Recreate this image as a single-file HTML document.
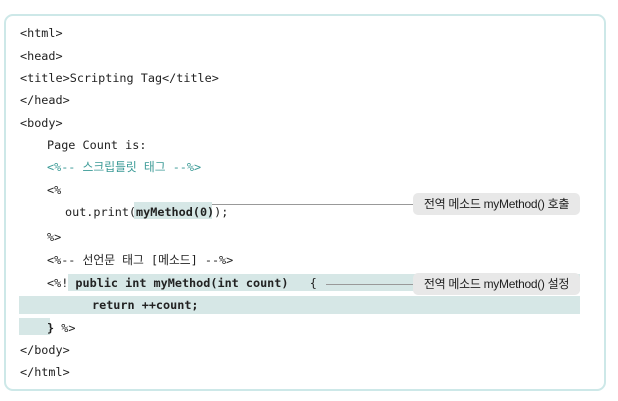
<!DOCTYPE html>
<html><head><meta charset="utf-8"><style>
body{margin:0;width:618px;height:401px;background:#fff;position:relative;font-family:"DejaVu Sans Mono","Noto Sans CJK KR",monospace;font-size:11.8px;color:#222;overflow:hidden}
.box{position:absolute;left:4px;top:14px;width:602px;height:377px;border:2px solid #cde8e8;border-radius:9px;box-sizing:border-box}
.l{position:absolute;white-space:pre;line-height:16px}
.hl{position:absolute;background:#d6e7e6}
.tag{position:absolute;background:#e8e8e8;border-radius:5px;font-family:"Liberation Sans","Noto Sans CJK KR",sans-serif;font-size:12px;color:#222;line-height:22px;text-align:center;width:167px;left:413px;letter-spacing:-0.3px}
.ln{position:absolute;height:1px;background:#999}
.c{color:#3a9a96}
b{font-weight:bold}
</style></head><body>
<div class="box"></div>
<div class="hl" style="left:134px;top:202px;width:78px;height:17px"></div>
<div class="hl" style="left:68px;top:274px;width:512px;height:17px"></div>
<div class="hl" style="left:19px;top:296px;width:561px;height:18px"></div>
<div class="hl" style="left:19px;top:318px;width:31px;height:17px"></div>
<div class="ln" style="left:212px;top:204px;width:201px"></div>
<div class="ln" style="left:326px;top:284px;width:87px"></div>
<div class="tag" style="top:193px">전역 메소드 myMethod() 호출</div>
<div class="tag" style="top:273px">전역 메소드 myMethod() 설정</div>
<div class="l" style="left:20px;top:25px">&lt;html&gt;</div>
<div class="l" style="left:20px;top:48px">&lt;head&gt;</div>
<div class="l" style="left:20px;top:70px">&lt;title&gt;Scripting Tag&lt;/title&gt;</div>
<div class="l" style="left:20px;top:92px">&lt;/head&gt;</div>
<div class="l" style="left:20px;top:115px">&lt;body&gt;</div>
<div class="l" style="left:47px;top:137px">Page Count is:</div>
<div class="l c" style="left:47px;top:159px">&lt;%-- 스크립틀릿 태그 --%&gt;</div>
<div class="l" style="left:47px;top:182px">&lt;%</div>
<div class="l" style="left:65px;top:204px">out.print(<b>myMethod(0)</b>);</div>
<div class="l" style="left:47px;top:229px">%&gt;</div>
<div class="l" style="left:47px;top:252px">&lt;%-- 선언문 태그 [메소드] --%&gt;</div>
<div class="l" style="left:47px;top:275px">&lt;%! <b>public int myMethod(int count)</b>   {</div>
<div class="l" style="left:92px;top:297px"><b>return ++count;</b></div>
<div class="l" style="left:47px;top:320px"><b>}</b> %&gt;</div>
<div class="l" style="left:20px;top:342px">&lt;/body&gt;</div>
<div class="l" style="left:20px;top:364px">&lt;/html&gt;</div>
</body></html>
